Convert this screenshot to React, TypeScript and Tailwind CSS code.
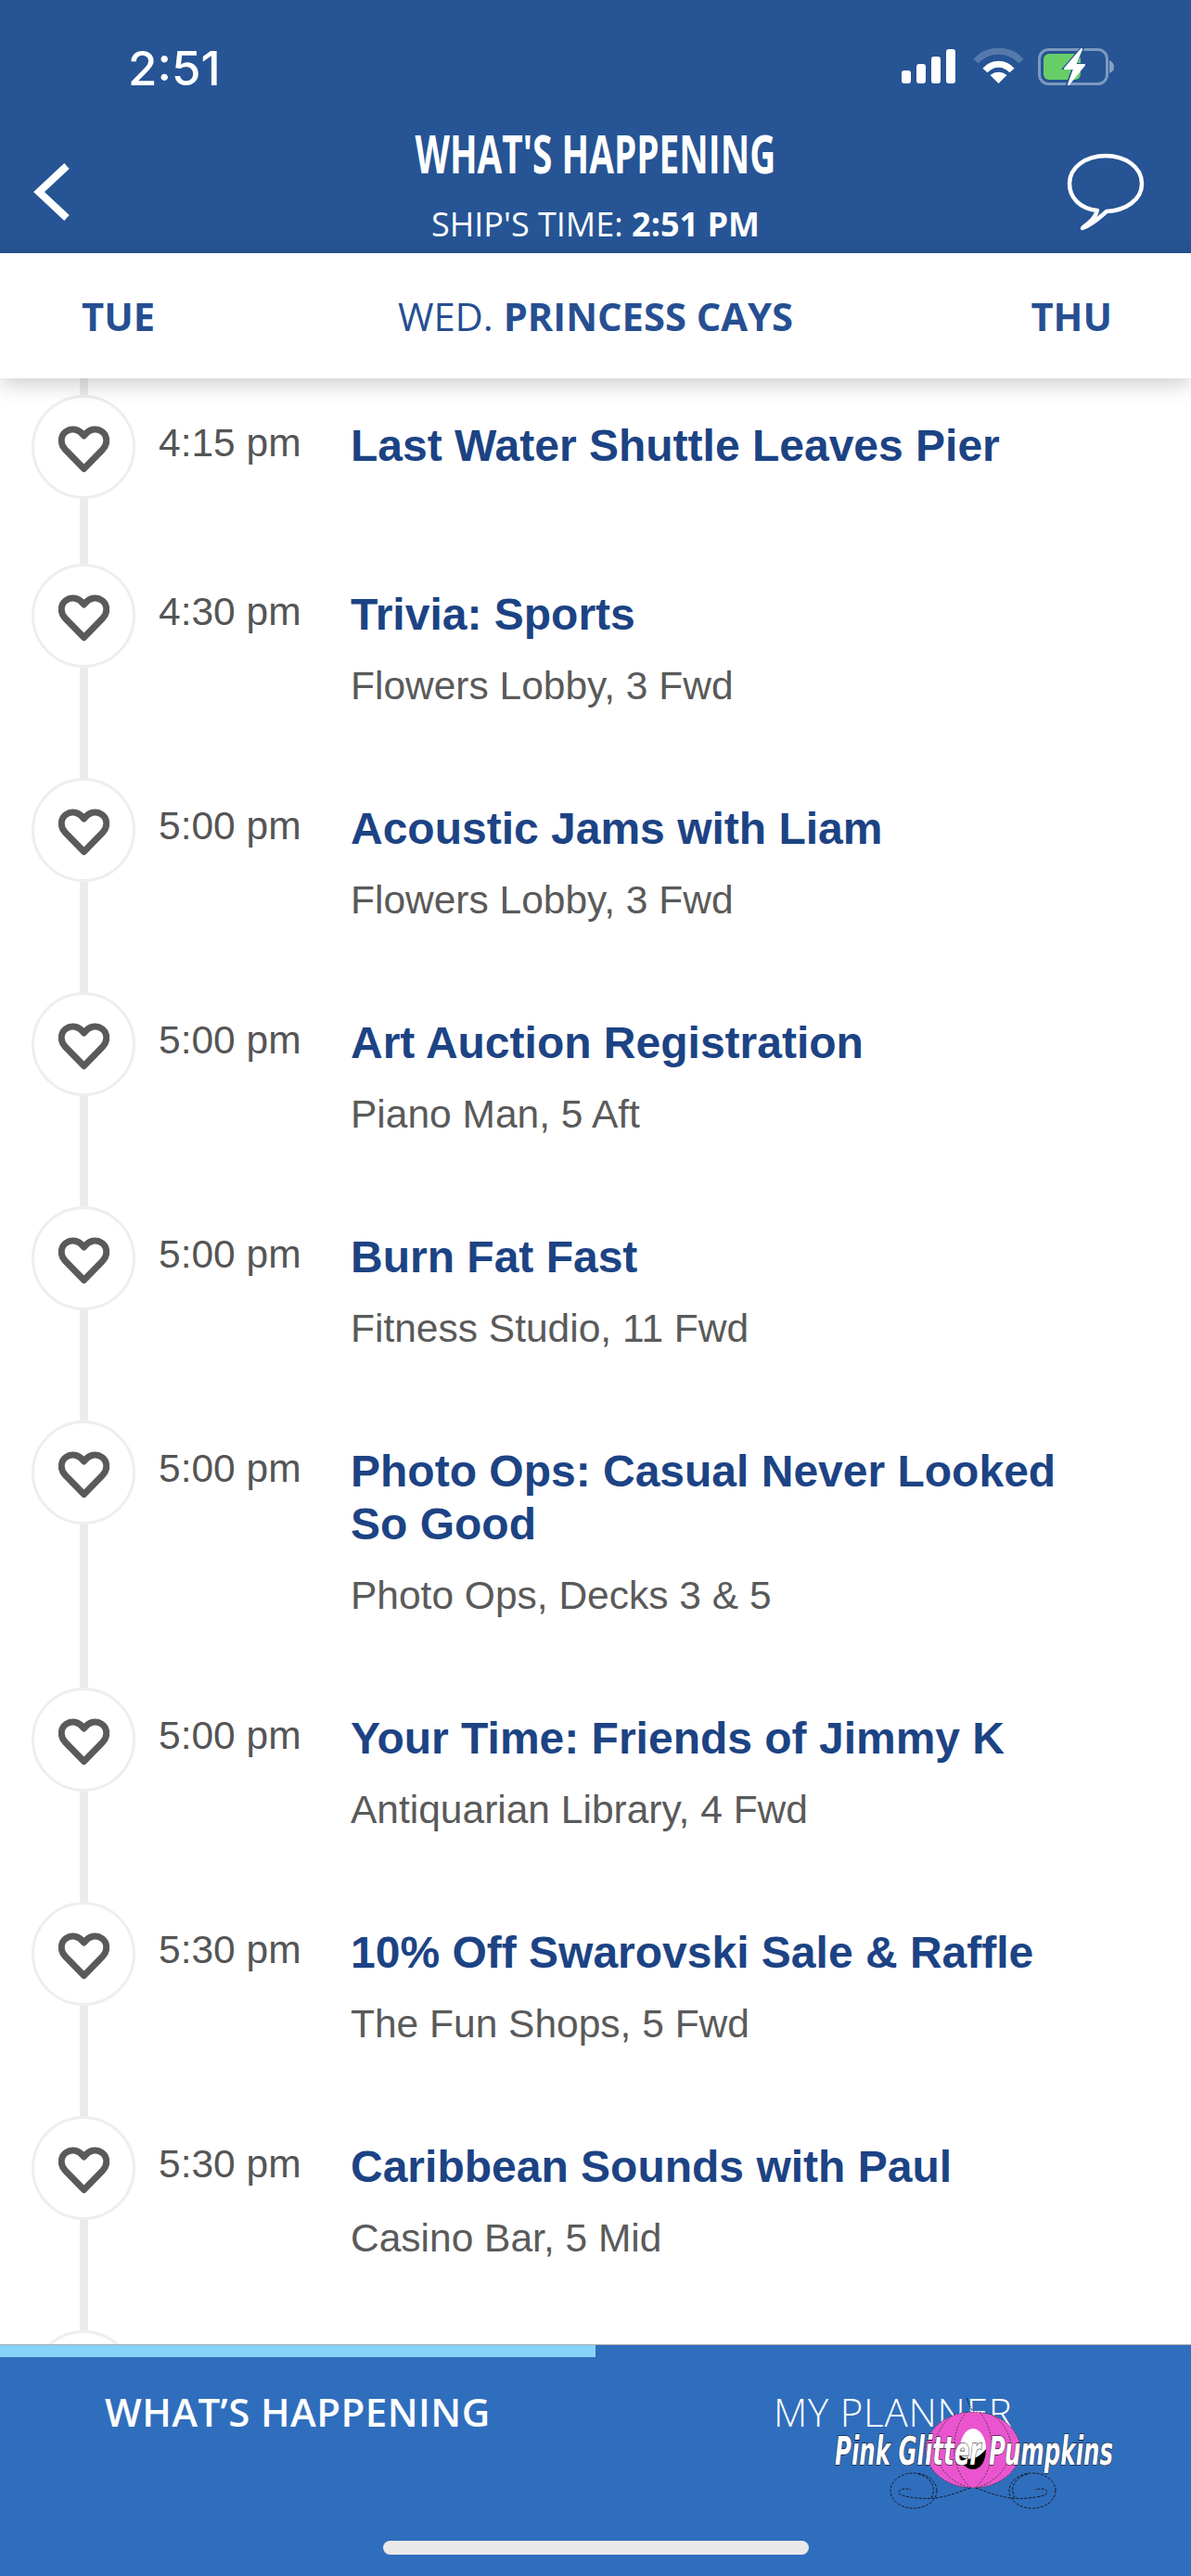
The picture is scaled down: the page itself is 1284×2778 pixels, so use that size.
import React from "react";

const rows = [
  { time: "4:15 pm", title: ["Last Water Shuttle Leaves Pier"], sub: "", h: "h-[182px]" },
  { time: "4:30 pm", title: ["Trivia: Sports"], sub: "Flowers Lobby, 3 Fwd", h: "h-[231px]" },
  { time: "5:00 pm", title: ["Acoustic Jams with Liam"], sub: "Flowers Lobby, 3 Fwd", h: "h-[231px]" },
  { time: "5:00 pm", title: ["Art Auction Registration"], sub: "Piano Man, 5 Aft", h: "h-[231px]" },
  { time: "5:00 pm", title: ["Burn Fat Fast"], sub: "Fitness Studio, 11 Fwd", h: "h-[231px]" },
  { time: "5:00 pm", title: ["Photo Ops: Casual Never Looked", "So Good"], sub: "Photo Ops, Decks 3 & 5", h: "h-[288px]" },
  { time: "5:00 pm", title: ["Your Time: Friends of Jimmy K"], sub: "Antiquarian Library, 4 Fwd", h: "h-[231px]" },
  { time: "5:30 pm", title: ["10% Off Swarovski Sale & Raffle"], sub: "The Fun Shops, 5 Fwd", h: "h-[231px]" },
  { time: "5:30 pm", title: ["Caribbean Sounds with Paul"], sub: "Casino Bar, 5 Mid", h: "h-[231px]" },
];

function Heart() {
  return (
    <svg className="mt-[5px]" width="55" height="51" viewBox="0 0 55 51" fill="none">
      <path
        d="M27.5 46.5 L7.5 26 C1.5 20 2 11 8 6.5 C14 2 22 3.5 27.5 11 C33 3.5 41 2 47 6.5 C53 11 53.5 20 47.5 26 Z"
        stroke="#5a5a5a"
        strokeWidth="7"
        strokeLinejoin="round"
      />
    </svg>
  );
}

function Circle({ heart = true }: { heart?: boolean }) {
  return (
    <div className="w-[112px] h-[112px] shrink-0 rounded-full border-[3px] border-[#eeeeee] bg-white flex items-center justify-center">
      {heart && <Heart />}
    </div>
  );
}

function Row({ r }: { r: (typeof rows)[number] }) {
  return (
    <div className={`flex shrink-0 ${r.h}`}>
      <div className="ml-[34px] w-[112px] shrink-0 flex flex-col items-center">
        <Circle />
        <div className="w-[9px] flex-1 bg-[#ebebeb]" />
      </div>
      <div className="ml-[25px] w-[207px] shrink-0 pt-[27px] text-[42.5px] leading-[50px] text-[#555555]">{r.time}</div>
      <div className="pt-[26px]">
        <div className="text-[48px] leading-[57px] font-bold text-[#1c4384] whitespace-nowrap">
          {r.title.map((t) => (
            <div key={t}>{t}</div>
          ))}
        </div>
        {r.sub && <div className="mt-[24px] text-[42.5px] leading-[50px] text-[#5a5a5a] whitespace-nowrap">{r.sub}</div>}
      </div>
    </div>
  );
}

function StatusIcons() {
  return (
    <svg width="230" height="42" viewBox="0 0 230 42" fill="none">
      <rect x="0" y="24" width="10" height="14" rx="3" fill="#fff" />
      <rect x="16" y="17" width="10" height="21" rx="3" fill="#fff" />
      <rect x="32" y="9" width="10" height="29" rx="3" fill="#fff" />
      <rect x="48" y="1" width="10" height="37" rx="3" fill="#fff" />
      <path d="M80 14 C93 -0.5 116 -0.5 129 14" stroke="#fff" strokeOpacity="0.22" strokeWidth="7" />
      <path d="M90 24 C98 15 111 15 119 24" stroke="#fff" strokeWidth="7" />
      <path d="M104.5 38 L95.5 29 C101 24.5 108 24.5 113.5 29 Z" fill="#fff" />
      <rect x="148.5" y="1.5" width="73" height="37" rx="10" stroke="#fff" strokeOpacity="0.4" strokeWidth="3" />
      <path d="M224 13 C228 15 229 18 229 20 C229 23 228 25 224 27 Z" fill="#fff" fillOpacity="0.45" />
      <rect x="153" y="6" width="40" height="28" rx="6" fill="#67ce67" />
      <path d="M192 0 L172 23 L183 23 L176 42 L201 16 L189 16 L197 0 Z" fill="#265494" />
      <path d="M194 1 L176 22 L186 22 L180 39 L197 18 L187 18 Z" fill="#fff" stroke="#fff" strokeWidth="2" strokeLinejoin="round" />
    </svg>
  );
}

function Logo() {
  return (
    <svg className="absolute left-[860px] top-[31px]" width="380" height="160" viewBox="0 0 380 160" fill="none">
      <path d="M182 26 L188 40" stroke="#111" strokeWidth="1" strokeDasharray="2 1" />
      <ellipse cx="189" cy="82" rx="51" ry="41" fill="#ea55cf" />
      <g stroke="#333" strokeWidth="0.8" strokeDasharray="2 1.5">
        <ellipse cx="189" cy="82" rx="51" ry="41" />
        <path d="M182 41 C162 65 165 105 187 123" />
        <path d="M196 41 C216 65 213 105 191 123" />
        <path d="M170 43 C135 65 145 110 183 122" />
        <path d="M208 43 C243 65 233 110 195 122" />
      </g>
      <ellipse cx="189" cy="81" rx="14" ry="22" fill="#fff" />
      <path d="M203 81 C203 95 197 103 189 103 C181 103 175 95 175 88 C185 96 196 90 203 81 Z" fill="#000" />
      <g stroke="#111" strokeWidth="0.9" strokeDasharray="3 1.5" fill="none">
        <path d="M186 123 C165 131 150 136 130 134 C118 133 108 131 109 127 C110 124 116 123 122 125" />
        <ellipse cx="125" cy="126" rx="25" ry="19" />
        <path d="M130 108 C146 112 150 125 143 135" />
        <path d="M192 123 C213 131 228 136 248 134 C260 133 270 131 269 127 C268 124 262 123 256 125" />
        <ellipse cx="253" cy="126" rx="25" ry="19" />
        <path d="M248 108 C232 112 228 125 235 135" />
      </g>
      <text
        x="40"
        y="98"
        textLength="300"
        lengthAdjust="spacingAndGlyphs"
        fontFamily="'DejaVu Sans', sans-serif"
        fontStyle="italic"
        fontWeight="700"
        fontSize="42"
        fill="#fff"
        stroke="#000"
        strokeWidth="1.2"
        paintOrder="stroke"
      >
        Pink Glitter Pumpkins
      </text>
    </svg>
  );
}

export default function App() {
  return (
    <div className="relative w-[1284px] h-[2778px] overflow-hidden bg-white flex flex-col font-['Liberation_Sans',sans-serif]">
      <header className="h-[273px] shrink-0 bg-[#265494] text-white flex flex-col">
        <div className="h-[132px] shrink-0 flex justify-between items-start pl-[138px] pr-[82px]">
          <div className="mt-[46px] text-[51px] leading-[56px] font-['Inter',sans-serif] font-medium">2:51</div>
          <div className="mt-[52px]">
            <StatusIcons />
          </div>
        </div>
        <div className="grid grid-cols-[1fr_auto_1fr] items-start font-['Open_Sans',sans-serif]">
          <svg className="ml-[34px] mt-[43px]" width="44" height="64" viewBox="0 0 44 64" fill="none">
            <path d="M38 4 L8 32 L38 60" stroke="#fff" strokeWidth="8" />
          </svg>
          <div className="flex flex-col items-center">
            <div className="mt-[5px] h-[57px] text-[57px] leading-[57px] font-bold whitespace-nowrap scale-x-[0.68]">WHAT'S HAPPENING</div>
            <div className="mt-[26px] text-[36px] leading-[44px] whitespace-nowrap">
              SHIP'S TIME: <span className="font-bold">2:51 PM</span>
            </div>
          </div>
          <svg className="justify-self-end mr-[50px] mt-[33px]" width="84" height="84" viewBox="0 0 84 84" fill="none">
            <path
              d="M42 3 C63 3 81 15 81 33 C81 51 63 62 43 63 C35 70 28 77 17 81 C24 75 31 70 33 62 C14 60 3 48 3 33 C3 15 21 3 42 3 Z"
              stroke="#fff"
              strokeWidth="4.5"
              strokeLinejoin="round"
            />
          </svg>
        </div>
      </header>

      <nav className="relative z-10 h-[135px] shrink-0 bg-white grid grid-cols-[1fr_auto_1fr] items-center pl-[88px] pr-[85px] text-[41.7px] leading-[52px] text-[#264f92] font-['Open_Sans',sans-serif] shadow-[0_6px_22px_rgba(0,0,0,0.2)]">
        <div className="font-bold">TUE</div>
        <div className="whitespace-nowrap mr-[3px]">
          WED. <span className="font-bold">PRINCESS CAYS</span>
        </div>
        <div className="font-bold justify-self-end">THU</div>
      </nav>

      <main className="flex-1 min-h-0 overflow-hidden flex flex-col">
        <div className="ml-[86px] w-[9px] h-[18px] shrink-0 bg-[#ebebeb]" />
        {rows.map((r, i) => (
          <Row key={i} r={r} />
        ))}
        <div className="ml-[34px] shrink-0">
          <Circle heart={false} />
        </div>
      </main>

      <footer className="relative h-[250px] shrink-0 border-t-[1px] border-[#b0b0b0] bg-[#2f6ebd] text-white text-[42px] leading-[52px] font-['Open_Sans',sans-serif] flex items-start">
        <div className="w-[642px] h-[13px] shrink-0 bg-[#87d3f9]" />
        <div className="absolute left-0 right-0 top-[46px] grid grid-cols-2">
          <div className="pl-[113px] font-semibold tracking-[0.45px]">WHAT’S HAPPENING</div>
          <div className="pl-[192px] font-light tracking-[0.8px]">MY PLANNER</div>
        </div>
        <Logo />
        <div className="absolute left-[413px] top-[211px] w-[459px] h-[15px] rounded-full bg-[#e9e9e9]" />
      </footer>
    </div>
  );
}
